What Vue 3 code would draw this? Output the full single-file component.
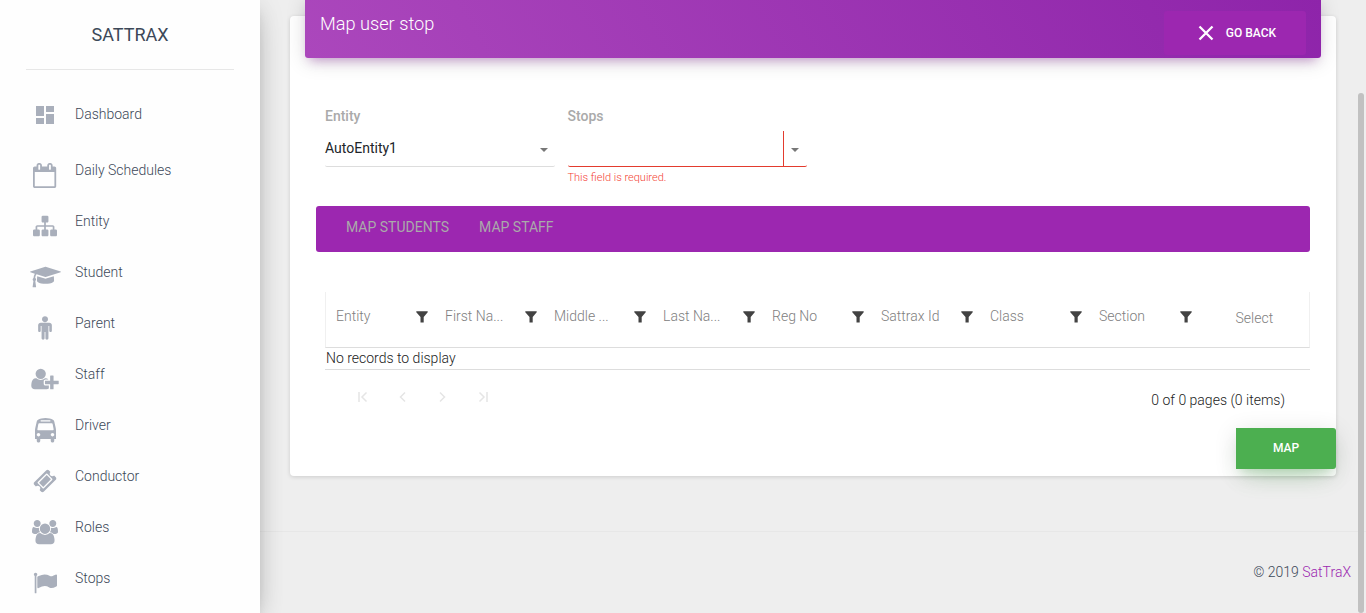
<script setup>
const menu = [
  { label: 'Dashboard', box: '0 0 24 24', w: 24, h: 24, top: 0, d: 'M3 13h8V3H3v10zm0 8h8v-6H3v6zm10 0h8V11h-8v10zm0-18v6h8V3h-8z' },
  { label: 'Daily Schedules', box: '64 0 1664 1792', w: 23.2, h: 25, top: 5, d: 'M192 1664h1408v-1024h-1408v1024zm384-1216v-288q0-14-9-23t-23-9h-64q-14 0-23 9t-9 23v288q0 14 9 23t23 9h64q14 0 23-9t9-23zm768 0v-288q0-14-9-23t-23-9h-64q-14 0-23 9t-9 23v288q0 14 9 23t23 9h64q14 0 23-9t9-23zm384-64v1280q0 52-38 90t-90 38h-1408q-52 0-90-38t-38-90v-1280q0-52 38-90t90-38h128v-96q0-66 47-113t113-47h64q66 0 113 47t47 113v96h384v-96q0-66 47-113t113-47h64q66 0 113 47t47 113v96h128q52 0 90 38t38 90z' },
  { label: 'Entity', box: '0 0 1792 1792', w: 24, h: 24, top: 5, d: 'M1792 1248v320q0 40-28 68t-68 28h-320q-40 0-68-28t-28-68v-320q0-40 28-68t68-28h96v-192h-512v192h96q40 0 68 28t28 68v320q0 40-28 68t-68 28h-320q-40 0-68-28t-28-68v-320q0-40 28-68t68-28h96v-192h-512v192h96q40 0 68 28t28 68v320q0 40-28 68t-68 28h-320q-40 0-68-28t-28-68v-320q0-40 28-68t68-28h96v-192q0-52 38-90t90-38h512v-192h-96q-40 0-68-28t-28-68v-320q0-40 28-68t68-28h320q40 0 68 28t28 68v320q0 40-28 68t-68 28h-96v192h512q52 0 90 38t38 90v192h96q40 0 68 28t28 68z' },
  { label: 'Student', box: '0 0 2304 1792', w: 31, h: 24, top: 5.4, d: 'M1774 836l18 316q4 69-82 128t-235 93.500-323 34.500-323-34.500-235-93.500-82-128l18-316 574 181q22 7 48 7t48-7zm530-324q0 23-22 31l-1120 352q-4 1-10 1t-10-1l-652-206q-43 34-71 111.500t-34 178.500q63 36 63 109 0 69-58 107l58 433q2 14-8 25-9 11-24 11h-192q-15 0-24-11-10-11-8-25l58-433q-58-38-58-107 0-73 65-111 11-207 98-330l-333-104q-22-8-22-31t22-31l1120-352q4-1 10-1t10 1l1120 352q22 8 22 31z' },
  { label: 'Parent', box: '0 144 1024 1792', w: 14, h: 24, top: 5.4, d: 'M1024 832v416q0 40-28 68t-68 28-68-28-28-68v-352h-64v912q0 46-33 79t-79 33-79-33-33-79v-464h-64v464q0 46-33 79t-79 33-79-33-33-79v-912h-64v352q0 40-28 68t-68 28-68-28-28-68v-416q0-80 56-136t136-56h640q80 0 136 56t56 136zm-288-448q0 93-65.500 158.500t-158.500 65.500-158.500-65.500-65.500-158.500 65.500-158.500 158.500-65.500 158.500 65.500 65.500 158.500z' },
  { label: 'Staff', box: '0 0 2048 1792', w: 28, h: 24, top: 5.4, d: 'M704 896q-159 0-271.500-112.500t-112.500-271.500 112.500-271.500 271.500-112.500 271.500 112.500 112.500 271.500-112.500 271.500-271.500 112.500zm960 128h352q13 0 22.500 9.500t9.500 22.500v192q0 13-9.500 22.500t-22.500 9.500h-352v352q0 13-9.500 22.500t-22.500 9.500h-192q-13 0-22.500-9.500t-9.500-22.500v-352h-352q-13 0-22.500-9.500t-9.500-22.500v-192q0-13 9.500-22.500t22.500-9.500h352v-352q0-13 9.500-22.500t22.500-9.500h192q13 0 22.500 9.500t9.500 22.500v352zm-736 224q0 52 38 90t90 38h256v238q-68 50-171 50h-874q-121 0-194-69t-73-190q0-53 3.500-103.500t14-109 26.500-108.500 43-97.500 62-81 85.500-53.500 111.500-20q19 0 39 17 79 61 154.500 91.500t164.500 30.500 164.500-30.500 154.500-91.500q20-17 39-17 132 0 217 96h-223q-52 0-90 38t-38 90v192z' },
  { label: 'Driver', box: '0 0 1536 1792', w: 21, h: 24.500, top: 5, d: 'M384 1216q0-53-37.500-90.500t-90.500-37.500-90.500 37.500-37.500 90.500 37.500 90.500 90.500 37.500 90.500-37.500 37.500-90.500zm1024 0q0-53-37.500-90.500t-90.500-37.500-90.500 37.500-37.500 90.500 37.500 90.500 90.500 37.500 90.500-37.500 37.500-90.500zm-46-396l-72-384q-5-23-22.500-37.500t-40.500-14.500h-918q-23 0-40.500 14.500t-22.500 37.500l-72 384q-5 30 14 53t49 23h1062q30 0 49-23t14-53zm-226-612q0-20-14-34t-34-14h-640q-20 0-34 14t-14 34 14 34 34 14h640q20 0 34-14t14-34zm400 725v603h-128v128q0 53-37.500 90.500t-90.500 37.500-90.500-37.500-37.500-90.500v-128h-768v128q0 53-37.500 90.500t-90.500 37.500-90.500-37.500-37.500-90.500v-128h-128v-603q0-112 25-223l103-454q9-78 97.500-137t230-89 312.500-30 312.500 30 230 89 97.500 137l105 454q23 102 23 223z' },
  { label: 'Conductor', box: '0 0 1792 1792', w: 24, h: 24, top: 5.4, d: 'M1024 452l316 316-572 572-316-316zm-211 979l618-618q19-19 19-45t-19-45l-362-362q-18-18-45-18t-45 18l-618 618q-19 19-19 45t19 45l362 362q18 18 45 18t45-18zm889-637l-907 908q-37 37-90.500 37t-90.500-37l-126-126q56-56 56-136t-56-136-136-56-136 56l-125-126q-37-37-37-90.500t37-90.500l907-906q37-37 90.500-37t90.500 37l125 125q-56 56-56 136t56 136 136 56 136-56l126 125q37 37 37 90.500t-37 90.500z' },
  { label: 'Roles', box: '0 0 1920 1792', w: 26, h: 24.300, top: 5.4, d: 'M593 896q-162 5-265 128h-134q-82 0-138-40.500t-56-118.500q0-353 124-353 6 0 43.500 21t97.500 42.500 119 21.500q67 0 133-23-5 37-5 66 0 139 81 256zm1071 637q0 120-73 189.500t-194 69.500h-874q-121 0-194-69.500t-73-189.500q0-53 3.500-103.500t14-109 26.500-108.500 43-97.500 62-81 85.500-53.500 111.500-20q10 0 43 21.500t73 48 107 48 135 21.500 135-21.500 107-48 73-48 43-21.500q61 0 111.500 20t85.500 53.500 62 81 43 97.500 26.500 108.500 14 109 3.500 103.500zm-1024-1277q0 106-75 181t-181 75-181-75-75-181 75-181 181-75 181 75 75 181zm704 384q0 159-112.500 271.500t-271.500 112.500-271.500-112.500-112.500-271.500 112.500-271.500 271.500-112.500 271.500 112.500 112.500 271.500zm576 225q0 78-56 118.500t-138 40.500h-134q-103-123-265-128 81-117 81-256 0-29-5-66 66 23 133 23 59 0 119-21.500t97.500-42.500 43.500-21q124 0 124 353zm-128-609q0 106-75 181t-181 75-181-75-75-181 75-181 181-75 181 75 75 181z' },
  { label: 'Stops', box: '0 0 1792 1792', w: 24, h: 24, top: 5.4, d: 'M320 256q0 72-64 110v1266q0 13-9.500 22.500t-22.500 9.500h-64q-13 0-22.500-9.500t-9.500-22.500v-1266q-64-38-64-110 0-53 37.500-90.500t90.500-37.500 90.500 37.500 37.500 90.500zm1472 64v763q0 25-12.500 38.500t-39.500 27.500q-215 116-369 116-61 0-123.500-22t-108.500-48-115.500-48-142.500-22q-192 0-464 146-17 9-33 9-26 0-45-19t-19-45v-742q0-32 31-55 21-14 79-43 236-120 421-120 107 0 200 29t219 88q38 19 88 19 54 0 117.500-21t110-47 88-47 54.500-21q26 0 45 19t19 45z' },
]
const columns = ['Entity', 'First Na...', 'Middle ...', 'Last Na...', 'Reg No', 'Sattrax Id', 'Class', 'Section']
const pagers = [
  'M2 1v10M9.500 1.500L5 6l4.500 4.500',
  'M8 1.500L3.500 6 8 10.500',
  'M3 1.500L7.500 6 3 10.500',
  'M10 1v10M2.500 1.500L7 6l-4.500 4.500',
]
</script>

<template>
  <div class="page">
    <aside class="sidebar">
      <div class="brand">SATTRAX</div>
      <nav class="menu">
        <a v-for="item in menu" :key="item.label" class="item">
          <span class="icon" :style="{ paddingTop: item.top + 'px' }">
            <svg :viewBox="item.box" :width="item.w" :height="item.h"><path :d="item.d" /></svg>
          </span>
          <span class="label">{{ item.label }}</span>
        </a>
      </nav>
    </aside>

    <main class="main">
      <section class="card">
        <header class="head">
          <h4>Map user stop</h4>
          <button class="back">
            <svg width="16" height="16" viewBox="0 0 16 16"><path d="M1.500 1.500l13 13M14.500 1.500l-13 13" /></svg>
            <span>GO BACK</span>
          </button>
        </header>

        <div class="fields">
          <div class="field entity">
            <label>Entity</label>
            <div class="control"><span class="value">AutoEntity1</span><i class="caret"></i></div>
          </div>
          <div class="field stops">
            <label>Stops</label>
            <div class="control"><span class="input"></span><span class="drop"><i class="caret"></i></span></div>
            <p class="error">This field is required.</p>
          </div>
        </div>

        <div class="tabs"><span>MAP STUDENTS</span><span>MAP STAFF</span></div>

        <div class="grid">
          <div class="thead">
            <div v-for="c in columns" :key="c" class="th">
              <span class="name">{{ c }}</span>
              <svg width="12" height="12" viewBox="0 0 12 12"><path d="M.3.300h11.400v1L7.700 6v5.500H4.500V6L.3 1.300z" /></svg>
            </div>
            <div class="select">Select</div>
          </div>
          <div class="empty">No records to display</div>
          <div class="pager">
            <div class="arrows">
              <svg v-for="p in pagers" :key="p" width="12" height="12" viewBox="0 0 12 12"><path :d="p" /></svg>
            </div>
            <span class="count">0 of 0 pages (0 items)</span>
          </div>
        </div>
        <button class="map">MAP</button>
      </section>

      <footer class="foot"><span>© 2019 <a>SatTraX</a></span></footer>
      <div class="scroll"></div>
    </main>
  </div>
</template>

<style>
body { background: #eee; overflow: hidden; }
</style>

<style scoped>
* { box-sizing: border-box; }
.page {
  display: flex;
  height: 613px;
  overflow: hidden;
  background: #eee;
  font-family: Roboto, "Liberation Sans", sans-serif;
  font-size: 14px;
  font-weight: 300;
  color: #3c4858;
}
.sidebar {
  flex: none;
  width: 260px;
  background: #fefefe;
  position: relative;
  z-index: 2;
  box-shadow: 0 10px 30px -12px rgba(0, 0, 0, .32), 0 4px 25px rgba(0, 0, 0, .1), 0 8px 10px -5px rgba(0, 0, 0, .16);
}
.brand {
  margin: 0 26px;
  height: 70px;
  line-height: 70px;
  text-align: center;
  font-size: 18px;
  font-weight: 400;
  border-bottom: 1px solid #e7e7e7;
}
.menu { padding: 29px 0 0 30px; }
.item { display: flex; height: 51px; }
.item:first-child { height: 56px; }
.item:first-child .icon { margin-top: 4px; }
.icon { flex: none; width: 30px; display: flex; justify-content: center; align-items: flex-start; margin-top: 3px; }
.icon svg { display: block; flex: none; fill: #a9afbb; }
.label { margin-left: 15px; line-height: 30px; }

.main { flex: 1; min-width: 0; padding: 16px 30px 0; position: relative; }
.card {
  display: flex;
  flex-direction: column;
  height: 460px;
  background: #fff;
  border-radius: 4px;
  box-shadow: 0 1px 4px rgba(0, 0, 0, .14);
}
.head {
  flex: none;
  margin: -20px 15px 0;
  height: 62px;
  padding: 0 15px;
  display: flex;
  justify-content: space-between;
  background: linear-gradient(60deg, #ab47bc, #8e24aa);
  border-radius: 3px;
  box-shadow: 0 4px 20px rgba(0, 0, 0, .14), 0 7px 10px -5px rgba(156, 39, 176, .4);
  color: #fff;
}
h4 { margin: 16px 0 0; font-size: 18.200px; line-height: 24px; font-weight: 300; }
.back {
  margin-top: 15px;
  width: 142px;
  height: 44px;
  border: 0;
  border-radius: 3px;
  background: #9c27b0;
  color: #fff;
  font: 500 12px Roboto, sans-serif;
  display: flex;
  align-items: center;
  justify-content: center;
  gap: 12px;
  padding: 0 0 0 4px;
}
.back svg { fill: none; stroke: #fff; stroke-width: 2.300; }

.fields { display: flex; padding: 50px 35px 0; height: 148px; flex: none; gap: 12.500px; }
.field label { display: block; font-weight: 500; color: #aaa; line-height: 17px; }
.entity { width: 230px; }
.stops { width: 239px; }
.control { height: 36px; margin-top: 6px; display: flex; align-items: center; justify-content: space-between; border-bottom: 1px solid #ddd; font-weight: 400; color: #212529; border-radius: 2px; }
.value { margin-top: -2px; }
.caret { width: 0; height: 0; border: 4px solid transparent; border-top: 4px solid #777; border-bottom: 0; margin: 3px 7px 0 0; }
.stops .control { border-color: #e33b2e; align-items: stretch; }
.drop { width: 24px; border-left: 1px solid #e33b2e; display: flex; align-items: center; justify-content: center; }
.drop .caret { margin: 3px 0 0; }
.error { margin: 4px 0 0; font-size: 11px; line-height: 14px; color: #f44336; }

.tabs {
  flex: none;
  height: 46px;
  margin: 0 26px;
  padding: 0 30px;
  display: flex;
  gap: 30px;
  line-height: 42px;
  background: #9c27b0;
  border-radius: 3px;
  color: #aaa;
  font-weight: 400;
}
.grid { margin: 40px 26px 0 35px; flex: none; }
.thead { height: 56px; display: flex; border: 1px solid #f0f0f0; border-top: 0; border-bottom-color: #ddd; }
.th { width: 109px; flex: none; display: flex; justify-content: space-between; padding: 16px 7px 0 10px; color: #808080; line-height: 17px; }
.th:nth-child(8) { padding-right: 6px; }
.name { white-space: nowrap; }
.th svg { fill: #424242; margin-top: 3px; }
.select { margin: 18px 0 0 37.500px; line-height: 17px; color: #808080; }
.empty { height: 22px; line-height: 21px; padding-left: 1px; border-bottom: 1px solid #ddd; color: #212121; }
.pager { display: flex; justify-content: space-between; padding: 21px 25px 0 32px; height: 58px; }
.arrows { display: flex; gap: 28px; }
.arrows svg { fill: none; stroke: #e5e5e5; stroke-width: 1.500; }
.count { line-height: 18px; color: #222; }
.map {
  align-self: flex-end;
  flex: none;
  width: 100px;
  height: 41px;
  border: 0;
  border-radius: 0 3px 3px 0;
  background: #4caf50;
  color: #fff;
  font: 500 12px Roboto, sans-serif;
  padding: 0 0 2px;
  box-shadow: 0 14px 26px -12px rgba(76, 175, 80, .42), 0 4px 23px rgba(0, 0, 0, .12), 0 8px 10px -5px rgba(76, 175, 80, .2);
}
.foot { margin: 55px -30px 0; height: 82px; border-top: 1px solid #e7e7e7; padding: 32px 15px 0; text-align: right; line-height: 17px; }
.foot a { color: #9c27b0; }
.scroll { position: absolute; right: 2px; top: 93px; width: 6px; height: 520px; border-radius: 3px; background: #c1c1c1; }
</style>
